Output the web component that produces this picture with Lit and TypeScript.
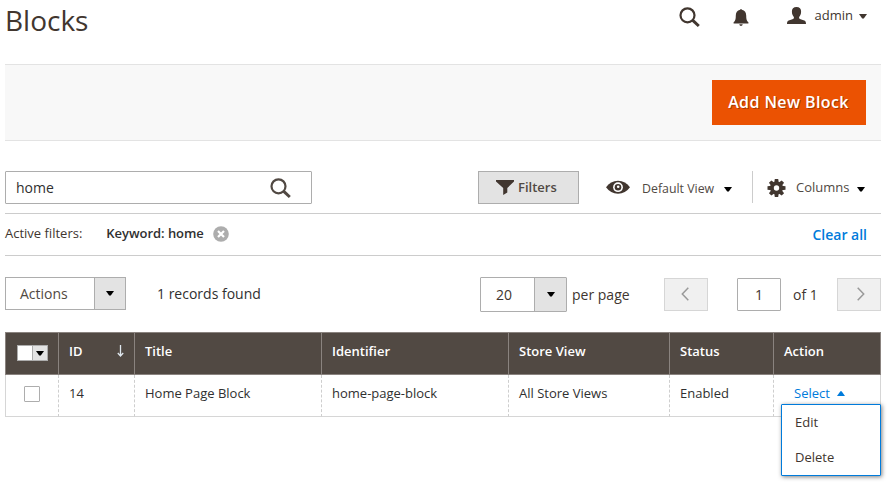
import { LitElement, html, css, svg } from "lit";
import { customElement, state } from "lit/decorators.js";

const magnifier = svg`<circle cx="8.500" cy="8.300" r="7" fill="none" stroke="currentColor" stroke-width="2.200"/><path d="M13.500 13.200L19.800 19" stroke="currentColor" stroke-width="3"/>`;

@customElement("app-root")
export class AppRoot extends LitElement {
  @state() private keyword = "home";

  static styles = css`
    :host {
      display: block;
      box-sizing: border-box;
      width: 887px;
      height: 484px;
      padding: 0 6px 0 5px;
      overflow: hidden;
      background: #fff;
      color: #41362f;
      font: 400 14px/20px "Open Sans", sans-serif;
    }
    * { box-sizing: border-box; }
    svg { display: block; flex: none; }
    button, input { font: inherit; color: inherit; margin: 0; padding: 0; border-radius: 0; outline: none; }
    button { border: 0; background: none; }
    h1 { margin: 0; font-size: 28px; font-weight: 400; line-height: 38px; padding-top: 1px; }
    .header { display: flex; height: 64px; justify-content: space-between; }
    .tools { display: flex; align-items: flex-start; }
    .tools .find { margin-top: 7px; }
    .tools .bell { margin: 9px 0 0 33px; }
    .tools .user { margin: 7px 0 0 38px; }
    .tools .name { margin: 5px 0 0 9px; font-size: 13px; }
    .tools .caret { margin: 14px 14px 0 6px; }
    .band { display: flex; height: 77px; padding: 15px 15px 0 0; justify-content: flex-end; align-items: flex-start; border: solid #e3e3e3; border-width: 1px 0; background: #f8f8f8; }
    .primary { width: 154px; height: 45px; padding: 0 1px 2px 0; background: #eb5202; color: #fff; font-size: 16px; font-weight: 600; letter-spacing: .4px; text-shadow: 1px 1px 0 rgba(0, 0, 0, .3); line-height: 42px; }
    .searchrow { display: flex; align-items: flex-start; height: 72px; padding-top: 30px; }
    .search { display: flex; width: 307px; height: 33px; border: 1px solid #adadad; border-radius: 1px; }
    .search input { width: 264px; padding-left: 10px; border: 0; height: 31px; background: none; color: #303030; }
    .search svg { margin-top: 6px; color: #514943; }
    .filters { display: flex; width: 101px; height: 33px; margin-left: 166px; border: 1px solid #adadad; background: #e3e3e3; font-size: 13px; font-weight: 600; color: #514943; line-height: 31px; padding-left: 17px; gap: 4px; }
    .filters svg { margin-top: 8px; }
    .view, .columns { display: flex; height: 32px; line-height: 32px; font-size: 13px; color: #514943; }
    .view { width: 174px; border-right: 1px solid #ccc; padding-left: 27px; font-size: 12.350px; line-height: 35px; }
    .view .label { margin-left: 12px; width: 82px; }
    .view .eye { margin-top: 9px; }
    .columns { padding-left: 14px; }
    .columns .label { margin-left: 10px; width: 61px; }
    .columns .gear { margin-top: 8px; }
    .drop { margin-top: 16px; color: #000; }
    .active { display: flex; height: 43px; border: solid #ccc; border-width: 1px 0; padding-right: 14px; line-height: 39px; font-size: 13px; }
    .active .kw { margin-left: 24px; width: 98px; white-space: nowrap; letter-spacing: -.04px; font-weight: 600; color: #303030; }
    .active svg { margin: 12px 0 0 9px; }
    .clear { margin-left: auto; color: #007bdb; font-size: 14px; font-weight: 600; line-height: 41px; }
    .paging { display: flex; height: 76px; padding-top: 21px; }
    .select { display: flex; border: 1px solid #adadad; height: 33px; line-height: 31px; }
    .select .arrow { display: flex; align-items: center; justify-content: center; border-left: 1px solid #adadad; background: #e3e3e3; width: 32px; color: #000; }
    .actions { width: 121px; }
    .actions .val { width: 88px; flex: none; padding-left: 14px; color: #514943; }
    .actions .arrow { width: 31px; }
    .found { margin-left: 31px; width: 323px; line-height: 33px; color: #303030; }
    .size { width: 87px; height: 35px; line-height: 34px; border-radius: 1px; }
    .size .val { width: 53px; padding-left: 15px; }
    .perpage { margin-left: 5px; width: 92px; line-height: 35px; }
    .nav { display: flex; align-items: center; justify-content: center; width: 44px; height: 33px; margin-top: 1px; padding: 0 2px 2px 0; border: 1px solid #d6d6d6; background: #f0f0f0; color: #999; }
    .nav.next { padding: 0 0 2px 4px; }
    .page { width: 44px; height: 33px; margin: 1px 0 0 29px; border: 1px solid #adadad; border-radius: 1px; text-align: center; }
    .of { width: 56px; padding-left: 12px; line-height: 35px; }
    .grid { display: grid; grid-template-columns: 54px 76px 187px 187px 161px 104px 107px; width: 876px; font-size: 13px; }
    .th { height: 43px; background: #514943; border: solid #8a837f; border-width: 1px 1px 1px 0; color: #fff; font-weight: 600; padding: 8px 10px 0; line-height: 20px; }
    .th:first-child { border-left-width: 1px; padding: 12px 0 0 11px; }
    .id { display: flex; justify-content: space-between; padding-right: 9px; }
    .id svg { margin-top: 4px; }
    .multi { display: flex; width: 31px; height: 16px; border: 1px solid #adadad; background: #fff; }
    .multi .arrow { display: flex; width: 15px; margin-left: auto; border-left: 1px solid #adadad; background: #e3e3e3; align-items: center; justify-content: center; color: #000; }
    .td { height: 42px; border-right: 1px dashed #cecece; border-bottom: 1px solid #d6d6d6; padding: 8px 10px 0; color: #303030; }
    .td.first { border-left: 1px solid #d6d6d6; padding: 11px 0 0 18px; }
    .td.last { border-right: 1px solid #d6d6d6; position: relative; padding-left: 20px; color: #007bdb; }
    .check { width: 16px; height: 16px; border: 1px solid #adadad; border-radius: 1px; background: #fff; }
    .trigger { display: flex; gap: 7px; }
    .trigger svg { margin-top: 8px; }
    .menu { position: absolute; left: 7px; top: 29px; width: 100px; height: 72px; border: 1px solid #007bdb; background: #fff; box-shadow: 1px 1px 4px rgba(0, 0, 0, .5); border-radius: 1px; color: #41362f; padding-left: 13px; line-height: 35px; }
  `;

  private down(cls = "", w = 8, h = 5) {
    return html`<svg class=${cls} width=${w} height=${h} viewBox="0 0 8 5" preserveAspectRatio="none"><path d="M0 0H8L4.8 4.6H3.2Z" fill="currentColor"/></svg>`;
  }

  render() {
    return html`
      <div class="header">
        <h1>Blocks</h1>
        <div class="tools">
          <svg class="find" width="21" height="21" viewBox="0 0 21 21">${magnifier}</svg>
          <svg class="bell" width="16" height="18" viewBox="0 0 16 18"><path d="M7.200 .8C7.200 .3 7.500 0 8 0s.8 .3 .8 .8C11.900 1.400 13.200 3.500 13.200 6.500C13.200 10.200 13.700 12.200 15.400 13.200V14.400H.6V13.200C2.300 12.200 2.800 10.200 2.800 6.500C2.800 3.500 4.100 1.400 7.200 .8ZM6.300 15.200H9.700C9.500 16.400 8.900 16.900 8 16.900S6.500 16.400 6.300 15.200Z" fill="currentColor"/></svg>
          <svg class="user" width="19" height="17" viewBox="0 0 19 17"><path d="M9.500 0C12.500 0 14.300 1.700 14.100 4.700C14.100 7 13.200 8.900 12.100 10V11.200C12.900 12.300 15.400 12.600 17.300 13.500C18.600 14.100 19 15 19 17H0C0 15 .4 14.100 1.700 13.500C3.600 12.600 6.100 12.300 6.900 11.200V10C5.800 8.900 4.900 7 4.900 4.700C4.700 1.700 6.500 0 9.500 0Z" fill="currentColor"/></svg>
          <span class="name">admin</span>
          ${this.down("caret")}
        </div>
      </div>
      <div class="band"><button class="primary">Add New Block</button></div>
      <div class="searchrow">
        <div class="search">
          <input .value=${this.keyword} aria-label="Search by keyword" />
          <svg width="21" height="21" viewBox="0 0 21 21">${magnifier}</svg>
        </div>
        <button class="filters">
          <svg width="18" height="16" viewBox="0 0 18 16"><path d="M0 0H18V1.500L11.300 8V12.500L7.200 15V8L0 1.500Z" fill="#41362f"/></svg>
          <span>Filters</span>
        </button>
        <div class="view">
          <svg class="eye" width="24" height="14" viewBox="0 0 24 14"><path d="M0 7.300C3 3 7 .7 12 .7S21 3 24 7.300C21 11.600 17 13.800 12 13.800S3 11.600 0 7.300Z" fill="#41362f"/><circle cx="12" cy="7.200" r="4.900" fill="#fff"/><circle cx="12" cy="7.200" r="3.300" fill="#41362f"/><circle cx="12.200" cy="6.800" r="1.300" fill="#fff"/></svg>
          <span class="label">Default View</span>${this.down("drop")}
        </div>
        <div class="columns">
          <svg class="gear" width="19" height="18" viewBox="-9.500 -9 19 18"><g fill="#41362f">${[0, 45, 90, 135].map((a) => svg`<path d="M-1.700 -9H1.700L2.300 -5V5L1.700 9H-1.700L-2.300 5V-5Z" transform="rotate(${a})"/>`)}<circle r="6.500"/></g><circle r="2.700" fill="#fff"/></svg>
          <span class="label">Columns</span>${this.down("drop")}
        </div>
      </div>
      <div class="active">
        <span>Active filters:</span>
        <span class="kw">Keyword: ${this.keyword}</span>
        <svg width="16" height="16" viewBox="0 0 16 16"><circle cx="8" cy="8" r="7.800" fill="#adadad"/><path d="M5 5L11 11M11 5L5 11" stroke="#fff" stroke-width="2.200"/></svg>
        <span class="clear">Clear all</span>
      </div>
      <div class="paging">
        <div class="select actions"><span class="val">Actions</span><span class="arrow">${this.down()}</span></div>
        <span class="found">1 records found</span>
        <div class="select size"><span class="val">20</span><span class="arrow">${this.down()}</span></div>
        <span class="perpage">per page</span>
        <button class="nav" aria-label="Previous"><svg width="8" height="14" viewBox="0 0 8 14"><path d="M7.300 .8L1.300 7L7.300 13.200" fill="none" stroke="currentColor" stroke-width="1.500"/></svg></button>
        <input class="page" value="1" aria-label="Page" />
        <span class="of">of 1</span>
        <button class="nav next" aria-label="Next"><svg width="8" height="14" viewBox="0 0 8 14"><path d="M.7 .8L6.700 7L.7 13.200" fill="none" stroke="currentColor" stroke-width="1.500"/></svg></button>
      </div>
      <div class="grid">
        <div class="th"><div class="multi"><span class="arrow">${this.down()}</span></div></div>
        <div class="th id"><span>ID</span><svg width="9" height="12" viewBox="0 0 9 12"><path d="M4.500 0V10.500M1.800 8L4.500 11L7.200 8" fill="none" stroke="#dfe7ee" stroke-width="1.300"/></svg></div>
        ${["Title", "Identifier", "Store View", "Status", "Action"].map((t) => html`<div class="th">${t}</div>`)}
        <div class="td first"><div class="check"></div></div>
        ${["14", "Home Page Block", "home-page-block", "All Store Views", "Enabled"].map((t) => html`<div class="td">${t}</div>`)}
        <div class="td last">
          <span class="trigger">Select<svg width="8" height="5" viewBox="0 0 8 5"><path d="M0 5H8L4.600 .3H3.400Z" fill="currentColor"/></svg></span>
          <div class="menu"><div>Edit</div><div>Delete</div></div>
        </div>
      </div>
    `;
  }
}
